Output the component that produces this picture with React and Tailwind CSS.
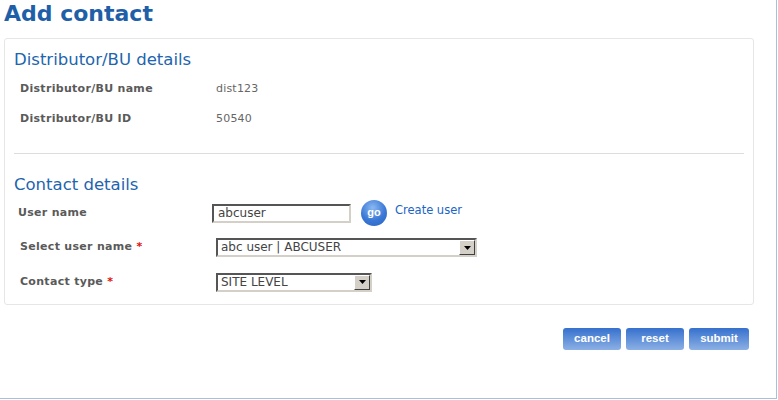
const DIST = [
  { label: 'Distributor/BU name', value: 'dist123' },
  { label: 'Distributor/BU ID', value: '50540' },
]

function Arrow() {
  return (
    <div className="w-[16px] h-full bg-[#d4d0c8] border border-t-white border-l-white border-r-[#404040] border-b-[#404040] flex items-center justify-center">
      <svg width="7" height="4" viewBox="0 0 7 4"><path d="M0 0h7L3.5 4z" fill="#000" /></svg>
    </div>
  )
}

function Select({ value, width }) {
  return (
    <div className={`${width} h-[19px] flex items-stretch bg-white border-2 border-t-[#555] border-l-[#555] border-r-[#d4d0c8] border-b-[#d4d0c8]`}>
      <span className="flex-1 pl-[3px] text-[12px] leading-[15px] text-[#444]">{value}</span>
      <Arrow />
    </div>
  )
}

export default function App() {
  return (
    <div className="w-[777px] h-[399px] bg-white border-r border-b border-[#a9c0da] font-['DejaVu_Sans',Verdana,sans-serif] text-[#666]">
      <h1 className="pl-[4px] text-[22px] leading-[27px] font-bold text-[#1f5fa8]">Add contact</h1>

      <div className="ml-[4px] mt-[11px] w-[750px] border border-[#e6e6e6] rounded-[3px] pt-[11px] pb-[5px]">
        <h2 className="pl-[9px] text-[16.5px] leading-[20px] text-[#2264ae]">Distributor/BU details</h2>
        <div className="mt-[4px]">
          {DIST.map((d, i) => (
            <div key={i} className="h-[30px] flex items-center text-[11px]">
              <span className="pl-[15px] w-[211px] font-bold tracking-[0.3px] text-[#5a5a5a]">{d.label}</span>
              <span className="tracking-[0.2px]">{d.value}</span>
            </div>
          ))}
        </div>
        <div className="mt-[19px] mx-[9px] border-t border-[#dddddd]" />

        <h2 className="mt-[21px] pl-[9px] text-[16.5px] leading-[20px] text-[#2264ae]">Contact details</h2>

        <div className="mt-[1px] h-[34px] flex items-center text-[11px]">
          <span className="pl-[13px] w-[207px] font-bold tracking-[0.3px] text-[#5a5a5a]">User name</span>
          <div className="w-[139px] h-[19px] bg-white border-2 border-t-[#555] border-l-[#555] border-r-[#d4d0c8] border-b-[#d4d0c8] pl-[4px] text-[12px] leading-[15px] text-[#444]">abcuser</div>
          <div className="ml-[10px] -mt-[1px] w-[26px] h-[26px] rounded-full bg-[radial-gradient(circle_at_45%_30%,#8ab8f2,#3a78d6_55%,#2a62c0)] flex items-center justify-center text-white font-bold text-[11px] font-['Liberation_Sans',Arial,sans-serif]">go</div>
          <span className="ml-[8px] -mt-[5px] text-[#1a64c6] text-[11.5px]">Create user</span>
        </div>

        <div className="h-[35px] flex items-center text-[11px]">
          <span className="pl-[15px] w-[211px] font-bold tracking-[0.3px] text-[#5a5a5a]">
            Select user name <span className="text-[#e0100c]">*</span>
          </span>
          <Select value="abc user | ABCUSER" width="w-[261px]" />
        </div>

        <div className="h-[34px] flex items-center text-[11px]">
          <span className="pl-[15px] w-[211px] font-bold tracking-[0.3px] text-[#5a5a5a]">
            Contact type <span className="text-[#e0100c]">*</span>
          </span>
          <Select value="SITE LEVEL" width="w-[156px]" />
        </div>
      </div>

      <div className="mt-[23px] pr-[27px] flex justify-end gap-[5px] font-['Liberation_Sans',Arial,sans-serif]">
        {['cancel', 'reset', 'submit'].map((b) => (
          <div
            key={b}
            className={`${b === 'submit' ? 'w-[60px]' : 'w-[58px]'} h-[22px] rounded-[3px] bg-gradient-to-b from-[#3570cd] to-[#8cb0e4] flex items-center justify-center text-white font-bold text-[11.5px]`}
          >
            {b}
          </div>
        ))}
      </div>
    </div>
  )
}
